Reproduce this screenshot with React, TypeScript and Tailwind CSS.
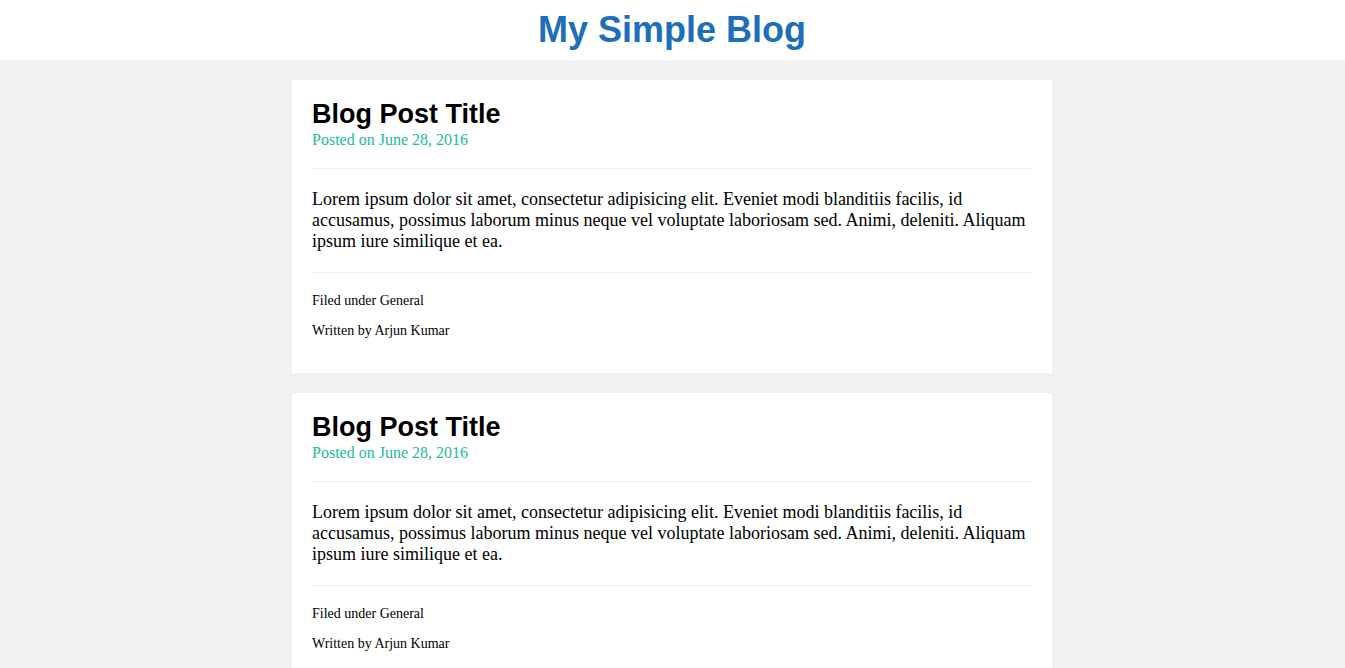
import React from 'react'

type Post = {
    title: string
    date: string
    body: string
    category: string
    author: string
}

const posts: Post[] = [1, 2, 3].map(() => ({
    title: 'Blog Post Title',
    date: 'June 28, 2016',
    body: 'Lorem ipsum dolor sit amet, consectetur adipisicing elit. Eveniet modi blanditiis facilis, id accusamus, possimus laborum minus neque vel voluptate laboriosam sed. Animi, deleniti. Aliquam ipsum iure similique et ea.',
    category: 'General',
    author: 'Arjun Kumar',
}))

const PostCard = ({ post }: { post: Post }) => {
    return (
        <article className="bg-white p-5">
            <h2 className="text-[27px] leading-[28px] font-bold text-black font-['Liberation_Sans',Arial,sans-serif]">
                {post.title}
            </h2>
            <p className="text-[16px] leading-6 text-[#1abc9c]">Posted on {post.date}</p>
            <hr className="mt-4 mb-5 border-0 border-t border-[#eeeeee]" />
            <p className="text-[18px] leading-[21px] text-black">{post.body}</p>
            <hr className="my-5 border-0 border-t border-[#eeeeee]" />
            <p className="text-[14px] leading-4 mb-[14px]">Filed under {post.category}</p>
            <p className="text-[14px] leading-4 mb-[14px]">Written by {post.author}</p>
        </article>
    )
}

export default function App() {
    return (
        <div className="min-h-screen bg-[#f1f1f1] font-['Liberation_Serif','Times_New_Roman',serif] text-black">
            <header className="h-[60px] bg-white flex items-center justify-center pr-px">
                <h1 className="text-[36px] font-bold text-[#1e6fba] font-['Liberation_Sans',Arial,sans-serif]">
                    My Simple Blog
                </h1>
            </header>
            <div className="pr-px">
                <main className="w-[760px] mx-auto pt-5 flex flex-col gap-5 pb-5">
                    {posts.map((post, index) => (
                        <PostCard key={index} post={post} />
                    ))}
                </main>
            </div>
        </div>
    )
}
